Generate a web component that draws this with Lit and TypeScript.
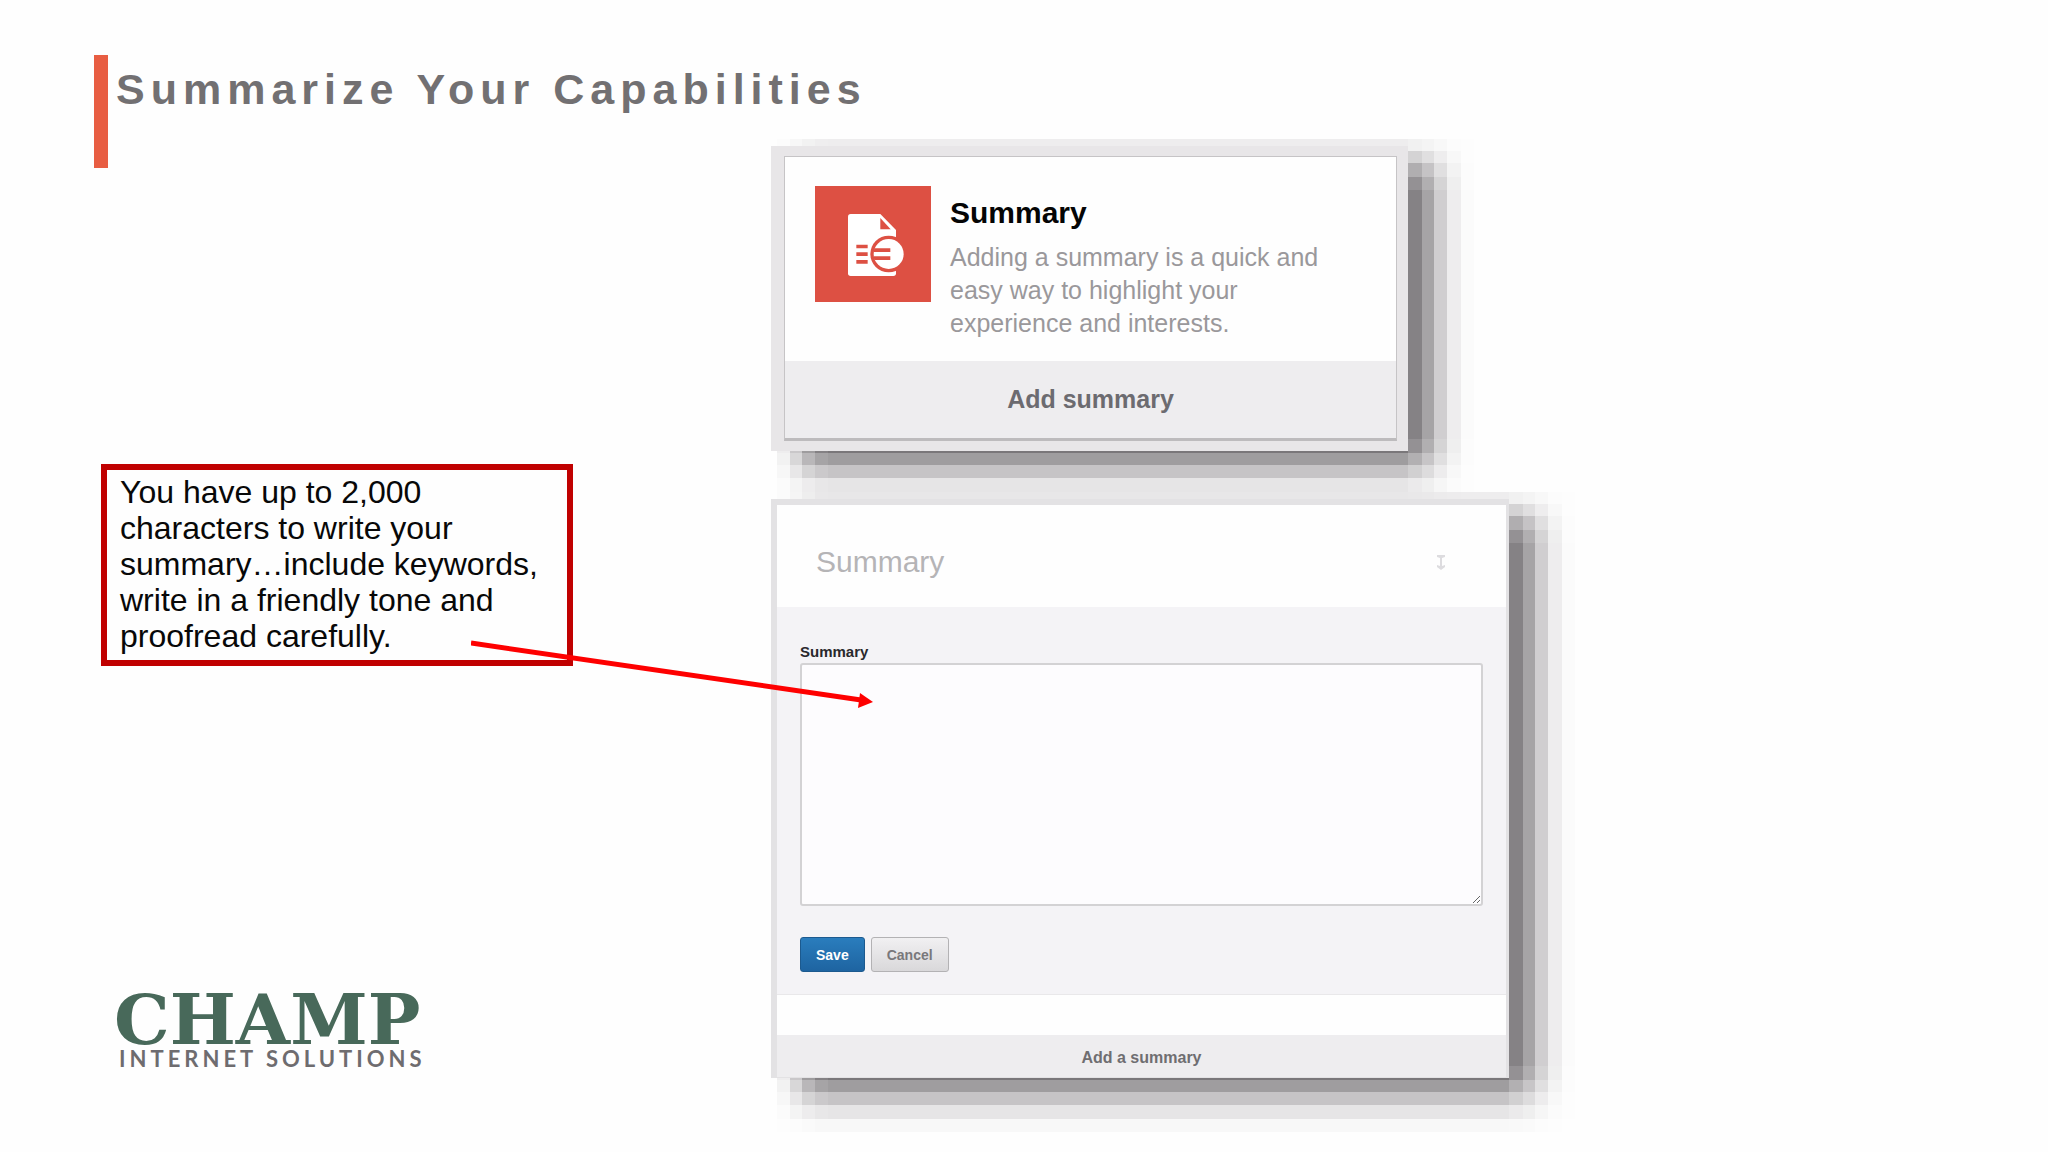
import { LitElement, html, css } from "lit";
import { customElement } from "lit/decorators.js";

const sans = css`"Liberation Sans", Arial, sans-serif`;

/** A picture-like frame that casts a stepped shadow down and to the right. */
@customElement("shadow-frame")
class ShadowFrame extends LitElement {
  static styles = css`
    :host {
      display: block;
      position: relative;
      isolation: isolate;
    }
    .shadow {
      position: absolute;
      z-index: -1;
      top: -7px;
      right: -66px;
      bottom: -54px;
      left: 6px;
      background: rgb(8 2 8 / 61%);
      mask-image: linear-gradient(
          to right,
          rgb(0 0 0 / 12%) 13px,
          rgb(0 0 0 / 40%) 13px 25px,
          rgb(0 0 0 / 72%) 25px 38px,
          rgb(0 0 0 / 92%) 38px 51px,
          #000 51px calc(100% - 66px),
          rgb(0 0 0 / 80%) calc(100% - 66px) calc(100% - 52px),
          rgb(0 0 0 / 58%) calc(100% - 52px) calc(100% - 40px),
          rgb(0 0 0 / 31%) calc(100% - 40px) calc(100% - 27px),
          rgb(0 0 0 / 11%) calc(100% - 27px) calc(100% - 13px),
          rgb(0 0 0 / 2%) calc(100% - 13px)
        ),
        linear-gradient(
          to bottom,
          rgb(0 0 0 / 11%) 12px,
          rgb(0 0 0 / 34%) 12px 24px,
          rgb(0 0 0 / 65%) 24px 38px,
          rgb(0 0 0 / 88%) 38px 51px,
          #000 51px calc(100% - 66px),
          rgb(0 0 0 / 88%) calc(100% - 66px) calc(100% - 52px),
          rgb(0 0 0 / 63%) calc(100% - 52px) calc(100% - 40px),
          rgb(0 0 0 / 37%) calc(100% - 40px) calc(100% - 27px),
          rgb(0 0 0 / 16%) calc(100% - 27px) calc(100% - 13px),
          rgb(0 0 0 / 4%) calc(100% - 13px)
        );
      mask-composite: intersect;
    }
  `;

  render() {
    return html`<div class="shadow"></div><slot></slot>`;
  }
}

@customElement("summary-card")
class SummaryCard extends LitElement {
  static styles = css`
    :host {
      display: block;
      font-family: ${sans};
    }
    .frame {
      padding: 10px 11px 10px 13px;
      background: #e8e6e8;
    }
    .card {
      border: 1px solid #c6c4c6;
      border-bottom: 3px solid #bdbbbd;
      background: #fefefe;
    }
    .body {
      display: flex;
      gap: 19px;
      padding: 29px 30px 21px;
    }
    .icon {
      flex: none;
      width: 116px;
      height: 116px;
    }
    .text {
      padding-top: 10px;
    }
    h2 {
      margin: 0 0 11px;
      font-size: 30px;
      line-height: 34px;
      color: #050505;
    }
    p {
      max-width: 390px;
      margin: 0;
      font-size: 25px;
      line-height: 33px;
      color: #9a989b;
    }
    .add {
      display: block;
      width: 100%;
      height: 77px;
      padding: 0;
      border: 0;
      background: #eeedef;
      font: bold 25px ${sans};
      color: #6c6b70;
    }
  `;

  render() {
    return html`
      <shadow-frame>
        <div class="frame">
          <section class="card">
            <div class="body">
              <svg class="icon" viewBox="0 0 348 348" aria-hidden="true">
                <rect width="348" height="348" fill="#dd5043" />
                <path
                  d="M107 84H196L243 132V262Q243 270 235 270H107Q99 270 99 262V92Q99 84 107 84Z"
                  fill="#fff"
                />
                <path d="M196 96L227 130H196Z" fill="#dd5043" />
                <path
                  d="M124 176H158V187H124ZM124 199H158V210H124ZM124 222H158V233H124Z"
                  fill="#dd5043"
                />
                <circle cx="221" cy="204" r="55" fill="#dd5043" />
                <circle cx="221" cy="204" r="45" fill="#fff" />
                <path d="M178 187H226V198H176ZM176 211H226V222H178Z" fill="#dd5043" />
              </svg>
              <div class="text">
                <h2>Summary</h2>
                <p>Adding a summary is a quick and easy way to highlight your experience and interests.</p>
              </div>
            </div>
            <button class="add" type="button">Add summary</button>
          </section>
        </div>
      </shadow-frame>
    `;
  }
}

@customElement("summary-editor")
class SummaryEditor extends LitElement {
  static styles = css`
    :host {
      display: block;
      font-family: ${sans};
    }
    .panel {
      border: solid #e3e2e4;
      border-width: 6px 3px 1px 6px;
      background: #fefefe;
    }
    header {
      display: flex;
      align-items: center;
      justify-content: space-between;
      box-sizing: border-box;
      height: 102px;
      padding: 12px 60px 0 39px;
    }
    h2 {
      margin: 0;
      font-size: 30px;
      line-height: 34px;
      font-weight: normal;
      color: #b5b4b6;
    }
    .move {
      width: 10px;
      height: 16px;
      padding: 0;
      border: 0;
      background: none;
    }
    .move svg {
      display: block;
    }
    form {
      padding: 36px 23px 22px;
      border-bottom: 1px solid #e9e8ea;
      background: #f4f3f6;
    }
    label {
      display: block;
      margin-bottom: 3px;
      font-size: 15px;
      line-height: 17px;
      font-weight: bold;
      color: #29282c;
    }
    textarea {
      display: block;
      box-sizing: border-box;
      width: 100%;
      height: 243px;
      border: 2px solid #d3d2d4;
      border-radius: 3px;
      background: #fdfcfe;
      font: 15px ${sans};
      outline: none;
    }
    .actions {
      display: flex;
      gap: 6px;
      margin-top: 31px;
    }
    .actions button {
      height: 35px;
      padding: 0 15px;
      border: 1px solid #b3b2b4;
      border-radius: 3px;
      background: linear-gradient(#f1f0f2, #d9d8da);
      font: bold 14px ${sans};
      color: #79787b;
    }
    .actions .save {
      border-color: #1c5a8f;
      background: linear-gradient(#2a7dbd, #1e64a1);
      color: #fff;
    }
    .add {
      display: block;
      width: 100%;
      height: 42px;
      margin-top: 40px;
      padding: 4px 0 0;
      border: 0;
      background: #eeedef;
      font: bold 16px ${sans};
      color: #6f6e71;
    }
  `;

  render() {
    return html`
      <shadow-frame>
        <section class="panel">
          <header>
            <h2>Summary</h2>
            <button class="move" type="button" aria-label="Move section">
              <svg width="10" height="16" viewBox="0 0 10 16" fill="#dddcdf">
                <path d="M1 1H9V3L6 4V12L9 11V13L5 16L1 13V11L4 12V4L1 3Z" />
              </svg>
            </button>
          </header>
          <form @submit=${(e: Event) => e.preventDefault()}>
            <label for="summary">Summary</label>
            <textarea id="summary"></textarea>
            <div class="actions">
              <button class="save" type="submit">Save</button>
              <button type="button">Cancel</button>
            </div>
          </form>
          <button class="add" type="button">Add a summary</button>
        </section>
      </shadow-frame>
    `;
  }
}

@customElement("app-root")
class AppRoot extends LitElement {
  static styles = css`
    :host {
      display: block;
      min-height: 100vh;
      background: #fefefe;
      font-family: ${sans};
    }
    .slide {
      display: grid;
      grid-template-columns: minmax(0, 771fr) minmax(0, 738fr) minmax(0, 539fr);
    }
    .notes {
      padding: 55px 0 0 94px;
    }
    h1 {
      min-height: 113px;
      margin: 0;
      padding: 9px 0 0 8px;
      box-sizing: border-box;
      border-left: 14px solid #e85d42;
      font-size: 43px;
      line-height: 50px;
      letter-spacing: 6px;
      white-space: nowrap;
      color: #727072;
    }
    .callout {
      position: relative;
      z-index: 2;
      box-sizing: border-box;
      max-width: 472px;
      margin: 296px 0 0 7px;
      padding: 4px 12px 6px 13px;
      border: 6px solid #c00000;
      font-size: 32px;
      line-height: 36px;
      color: #080808;
    }
    .callout p {
      margin: 0;
    }
    .arrow {
      position: absolute;
      top: 168px;
      left: 364px;
      pointer-events: none;
    }
    .logo {
      margin: 327px 0 0 20px;
    }
    .name {
      font-family: "DejaVu Serif", serif;
      font-weight: bold;
      font-size: 70px;
      line-height: 54px;
      color: #48695a;
    }
    .tagline {
      padding-left: 5px;
      font-family: Lato, sans-serif;
      font-weight: bold;
      font-size: 22px;
      line-height: 24px;
      letter-spacing: 4px;
      white-space: nowrap;
      color: #6e6c6f;
    }
    .shots {
      padding-top: 146px;
    }
    summary-card {
      margin: 0 101px 48px 0;
    }
  `;

  render() {
    return html`
      <main class="slide">
        <div class="notes">
          <h1>Summarize Your Capabilities</h1>
          <div class="callout">
            <p>You have up to 2,000 characters to write your summary…include keywords, write in a friendly tone and proofread carefully.</p>
            <svg class="arrow" width="404" height="72" viewBox="0 0 404 72" aria-hidden="true">
              <path d="M0 5L390 62" stroke="#fe0000" stroke-width="5" />
              <path d="M389 55L402 64L387 70Z" fill="#fe0000" />
            </svg>
          </div>
          <div class="logo">
            <div class="name">CHAMP</div>
            <div class="tagline">INTERNET SOLUTIONS</div>
          </div>
        </div>
        <div class="shots">
          <summary-card></summary-card>
          <summary-editor></summary-editor>
        </div>
      </main>
    `;
  }
}
